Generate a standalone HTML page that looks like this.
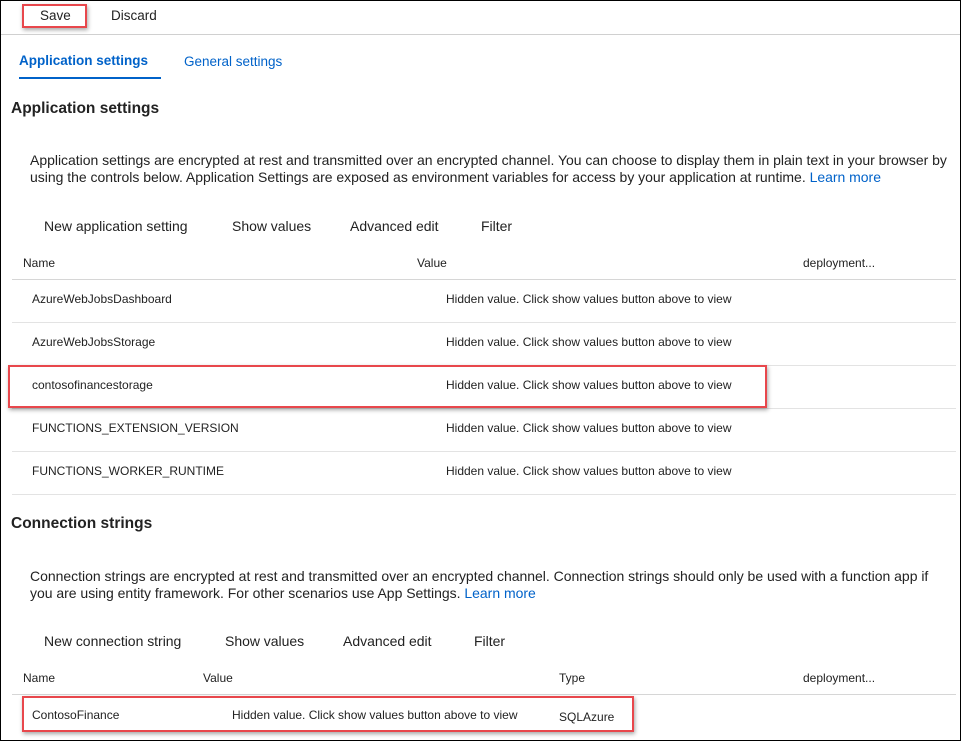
<!DOCTYPE html>
<html><head><style>
html,body{margin:0;padding:0}
body{width:961px;height:741px;position:relative;overflow:hidden;background:#fff;font-family:"Liberation Sans",Arial,sans-serif;color:#222}
.a{position:absolute;white-space:nowrap}
.frame{position:absolute;left:0;top:0;width:959px;height:739px;border:1px solid #000}
.line{position:absolute;height:1px;background:#e3e3e3}
.red{position:absolute;border:2px solid #e8474c;box-shadow:1px 2px 4px rgba(0,0,0,.35)}
.t{font-size:13.5px;color:#222}
.d{font-size:14px;color:#222;letter-spacing:-0.02px}
.s{font-size:12px;color:#222}
.h{font-size:15.5px;font-weight:bold;color:#222}
.blue{color:#0062c9}
</style></head><body>
<div class="frame"></div>
<div class="a t" style="left:40px;top:8px">Save</div>
<div class="a t" style="left:111px;top:8px">Discard</div>
<div class="red" style="left:22px;top:4px;width:61px;height:20px"></div>
<div class="line" style="left:1px;top:34px;width:959px;background:#d0d0d0"></div>

<div class="a t blue" style="left:19px;top:53px;font-weight:bold;font-size:13.5px">Application settings</div>
<div class="a" style="left:19px;top:77px;width:142px;height:2px;background:#0062c9"></div>
<div class="a t blue" style="left:184px;top:54px">General settings</div>

<div class="a h" style="left:11px;top:100px">Application settings</div>
<div class="a d" style="left:30px;top:152px">Application settings are encrypted at rest and transmitted over an encrypted channel. You can choose to display them in plain text in your browser by</div>
<div class="a d" style="left:30px;top:169px">using the controls below. Application Settings are exposed as environment variables for access by your application at runtime. <span class="blue">Learn more</span></div>

<div class="a d" style="left:44px;top:218px">New application setting</div>
<div class="a d" style="left:232px;top:218px">Show values</div>
<div class="a d" style="left:350px;top:218px">Advanced edit</div>
<div class="a d" style="left:481px;top:218px">Filter</div>

<div class="a s" style="left:23px;top:256px">Name</div>
<div class="a s" style="left:417px;top:256px">Value</div>
<div class="a s" style="left:803px;top:256px">deployment...</div>
<div class="line" style="left:12px;top:279px;width:944px;background:#d6d6d6"></div>

<div class="a s" style="left:32px;top:292px">AzureWebJobsDashboard</div>
<div class="a s" style="left:446px;top:292px">Hidden value. Click show values button above to view</div>
<div class="line" style="left:12px;top:322px;width:944px"></div>
<div class="a s" style="left:32px;top:335px">AzureWebJobsStorage</div>
<div class="a s" style="left:446px;top:335px">Hidden value. Click show values button above to view</div>
<div class="line" style="left:12px;top:365px;width:944px"></div>
<div class="a s" style="left:32px;top:378px">contosofinancestorage</div>
<div class="a s" style="left:446px;top:378px">Hidden value. Click show values button above to view</div>
<div class="line" style="left:12px;top:408px;width:944px"></div>
<div class="red" style="left:8px;top:365px;width:755px;height:39px"></div>
<div class="a s" style="left:32px;top:421px">FUNCTIONS_EXTENSION_VERSION</div>
<div class="a s" style="left:446px;top:421px">Hidden value. Click show values button above to view</div>
<div class="line" style="left:12px;top:451px;width:944px"></div>
<div class="a s" style="left:32px;top:464px">FUNCTIONS_WORKER_RUNTIME</div>
<div class="a s" style="left:446px;top:464px">Hidden value. Click show values button above to view</div>
<div class="line" style="left:12px;top:494px;width:944px"></div>

<div class="a h" style="left:11px;top:515px">Connection strings</div>
<div class="a d" style="left:30px;top:568px">Connection strings are encrypted at rest and transmitted over an encrypted channel. Connection strings should only be used with a function app if</div>
<div class="a d" style="left:30px;top:585px">you are using entity framework. For other scenarios use App Settings. <span class="blue">Learn more</span></div>

<div class="a d" style="left:44px;top:633px">New connection string</div>
<div class="a d" style="left:225px;top:633px">Show values</div>
<div class="a d" style="left:343px;top:633px">Advanced edit</div>
<div class="a d" style="left:474px;top:633px">Filter</div>

<div class="a s" style="left:23px;top:671px">Name</div>
<div class="a s" style="left:203px;top:671px">Value</div>
<div class="a s" style="left:559px;top:671px">Type</div>
<div class="a s" style="left:803px;top:671px">deployment...</div>
<div class="line" style="left:12px;top:694px;width:944px;background:#d6d6d6"></div>
<div class="a s" style="left:32px;top:708px">ContosoFinance</div>
<div class="a s" style="left:232px;top:708px">Hidden value. Click show values button above to view</div>
<div class="a s" style="left:559px;top:710px">SQLAzure</div>
<div class="red" style="left:22px;top:696px;width:608px;height:32px"></div>
</body></html>
